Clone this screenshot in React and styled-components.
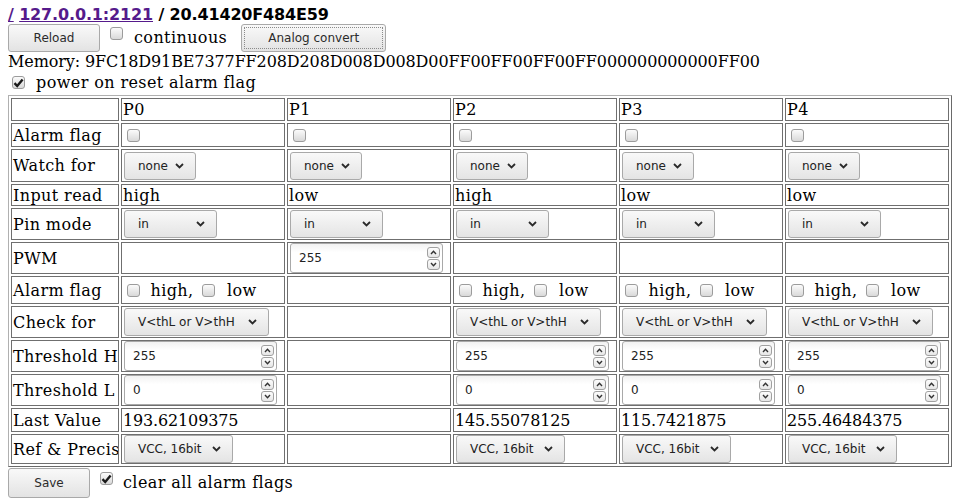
import React from "react";
import styled, { createGlobalStyle } from "styled-components";

const GlobalStyle = createGlobalStyle`
  * { box-sizing: border-box; }
  body {
    margin: 0;
    background: #fff;
    color: #000;
    font-family: "DejaVu Serif", serif;
    font-size: 16px;
  }
`;

const Page = styled.div`
  padding: 0 8px;
`;

const Title = styled.div`
  height: 24px;
  padding-top: 4px;
  line-height: 21px;
  font-family: "DejaVu Sans", sans-serif;
  font-weight: bold;
  font-size: 16px;
  letter-spacing: -0.15px;
  white-space: nowrap;

  a {
    color: #551a8b;
    text-decoration: underline;
  }
`;

const Bar = styled.div`
  display: flex;
  align-items: flex-start;
  height: ${(p) => p.$h}px;
  margin-top: ${(p) => p.$mt || 0}px;
  white-space: nowrap;
`;

const Label = styled.span`
  margin-top: ${(p) => p.$mt || 0}px;
  line-height: 20px;
  letter-spacing: ${(p) => (p.$num ? "-0.11px" : "0.4px")};
`;

const Button = styled.button`
  width: ${(p) => p.$w}px;
  height: ${(p) => p.$h || 28}px;
  margin: 0 ${(p) => p.$mr || 0}px 0 ${(p) => p.$ml || 0}px;
  padding: 0;
  border: 1px solid #a9a9a9;
  border-radius: 3px;
  background: linear-gradient(#f9f9f9, #e3e3e3);
  color: #2b2b2b;
  font-family: "DejaVu Sans", sans-serif;
  font-size: 12px;
  outline: ${(p) => (p.$focus ? "1px dotted #8a8a8a" : "none")};
  outline-offset: -4px;
  flex-shrink: 0;
`;

const Box = styled.span`
  display: inline-flex;
  align-items: center;
  justify-content: center;
  width: 13px;
  height: 13px;
  margin: ${(p) => p.$m || "0 3px 0 4px"};
  border: 1px solid #9c9c9c;
  border-radius: 3px;
  background: linear-gradient(#fbfbfb, #d9d9d9);
  vertical-align: -1px;
  flex-shrink: 0;
`;

const Check = ({ checked, m }) => (
  <Box $m={m}>
    {checked && (
      <svg width="11" height="10" viewBox="0 0 11 10">
        <path d="M1.5 5.2 L4.2 8 L9.6 1.4" fill="none" stroke="#1a1a1a" strokeWidth="2.4" />
      </svg>
    )}
  </Box>
);

const Table = styled.table`
  width: 100%;
  table-layout: fixed;
  border-collapse: separate;
  border-spacing: 2px;
  border: 1px solid;
  border-color: #b0b0b0 #6a6a6a #6a6a6a #b0b0b0;
`;

const Row = styled.tr`
  height: ${(p) => p.$h}px;
`;

const Cell = styled.td`
  width: ${(p) => (p.$label ? "108px" : "auto")};
  padding: 0 1px;
  border: 1px solid #6f6f6f;
  vertical-align: middle;
  white-space: nowrap;
  overflow: hidden;
  line-height: 19px;
  letter-spacing: ${(p) => (p.$num ? "-0.15px" : "0.4px")};
`;

const SelectBox = styled.div`
  display: inline-flex;
  align-items: center;
  justify-content: space-between;
  width: ${(p) => p.$w}px;
  height: 28px;
  margin-left: 1px;
  padding: 0 11px 0 13px;
  border: 1px solid #a9a9a9;
  border-radius: 3px;
  background: linear-gradient(#f9f9f9, #e4e4e4);
  color: #222;
  font-family: "DejaVu Sans", sans-serif;
  font-size: 12px;
  line-height: 14px;
  letter-spacing: 0;
  vertical-align: middle;
`;

const Chevron = () => (
  <svg width="9" height="6" viewBox="0 0 9 6">
    <path d="M1 1 L4.5 4.5 L8 1" fill="none" stroke="#2a2a2a" strokeWidth="1.8" />
  </svg>
);

const Select = ({ value, w }) => (
  <SelectBox $w={w}>
    <span>{value}</span>
    <Chevron />
  </SelectBox>
);

const NumBox = styled.div`
  display: inline-flex;
  align-items: center;
  justify-content: space-between;
  width: 153px;
  height: 30px;
  margin-left: 1px;
  padding: 0 2px 0 8px;
  border: 1px solid #a9a9a9;
  border-radius: 3px;
  background: linear-gradient(#f2f2f2, #fff 30%);
  color: #222;
  font-family: "DejaVu Sans", sans-serif;
  font-size: 12px;
  letter-spacing: 0;
  vertical-align: middle;
`;

const Spin = styled.div`
  display: flex;
  flex-direction: column;
  gap: 1px;
`;

const SpinBtn = styled.span`
  display: flex;
  align-items: center;
  justify-content: center;
  width: 13px;
  height: 11px;
  border: 1px solid #a0a0a0;
  border-radius: 3px;
  background: linear-gradient(#fdfdfd, #e6e6e6);
`;

const NumInput = ({ value }) => (
  <NumBox>
    <span>{value}</span>
    <Spin>
      <SpinBtn>
        <svg width="7" height="5" viewBox="0 0 7 5">
          <path d="M1 4 L3.5 1.3 L6 4" fill="none" stroke="#333" strokeWidth="1.4" />
        </svg>
      </SpinBtn>
      <SpinBtn>
        <svg width="7" height="5" viewBox="0 0 7 5">
          <path d="M1 1 L3.5 3.7 L6 1" fill="none" stroke="#333" strokeWidth="1.4" />
        </svg>
      </SpinBtn>
    </Spin>
  </NumBox>
);

const Flags = () => (
  <>
    <Check m="0 5px 0 4px" /> high,
    <Check m="0 7px 0 8px" /> low
  </>
);

const pins = [
  { input: "high", pwm: null, analog: true, last: "193.62109375" },
  { input: "low", pwm: "255", analog: false, last: "" },
  { input: "high", pwm: null, analog: true, last: "145.55078125" },
  { input: "low", pwm: null, analog: true, last: "115.7421875" },
  { input: "low", pwm: null, analog: true, last: "255.46484375" },
];

const rows = [
  { label: "", h: 23, render: (p, i) => `P${i}` },
  { label: "Alarm flag", h: 24, render: () => <Check m="0 0 0 4px" /> },
  { label: "Watch for", h: 33, render: () => <Select value="none" w={72} /> },
  { label: "Input read", h: 22, render: (p) => p.input },
  { label: "Pin mode", h: 32, render: () => <Select value="in" w={93} /> },
  { label: "PWM", h: 32, render: (p) => p.pwm && <NumInput value={p.pwm} /> },
  { label: "Alarm flag", h: 28, render: (p) => p.analog && <Flags /> },
  { label: "Check for", h: 32, render: (p) => p.analog && <Select value="V<thL or V>thH" w={145} /> },
  { label: "Threshold H", h: 32, render: (p) => p.analog && <NumInput value="255" /> },
  { label: "Threshold L", h: 32, render: (p) => p.analog && <NumInput value="0" /> },
  { label: "Last Value", h: 24, num: true, render: (p) => p.last },
  { label: "Ref & Precision", h: 29, render: (p) => p.analog && <Select value="VCC, 16bit" w={109} /> },
];

export default function App() {
  return (
    <Page>
      <GlobalStyle />
      <Title>
        <a href="#">/</a> <a href="#">127.0.0.1:2121</a> / 20.41420F484E59
      </Title>
      <Bar $h={28}>
        <Button $w={92}>Reload</Button>
        <Check m="3px 11px 0 10px" />
        <Label $mt={4}>continuous</Label>
        <Button $w={145} $ml={14} $focus>
          Analog convert
        </Button>
      </Bar>
      <Bar $h={22}>
        <Label $num>Memory: 9FC18D91BE7377FF208D208D008D008D00FF00FF00FF00FF000000000000FF00</Label>
      </Bar>
      <Bar $h={21}>
        <Check checked m="2px 11px 0 4px" />
        <Label $mt={-1}>power on reset alarm flag</Label>
      </Bar>
      <Table>
        <tbody>
          {rows.map((r, ri) => (
            <Row key={ri} $h={r.h}>
              <Cell $label>{r.label}</Cell>
              {pins.map((p, i) => (
                <Cell key={i} $num={r.num}>
                  {r.render(p, i)}
                </Cell>
              ))}
            </Row>
          ))}
        </tbody>
      </Table>
      <Bar $h={31} $mt={1}>
        <Button $w={82} $h={30}>
          Save
        </Button>
        <Check checked m="4px 10px 0 10px" />
        <Label $mt={5}>clear all alarm flags</Label>
      </Bar>
    </Page>
  );
}
